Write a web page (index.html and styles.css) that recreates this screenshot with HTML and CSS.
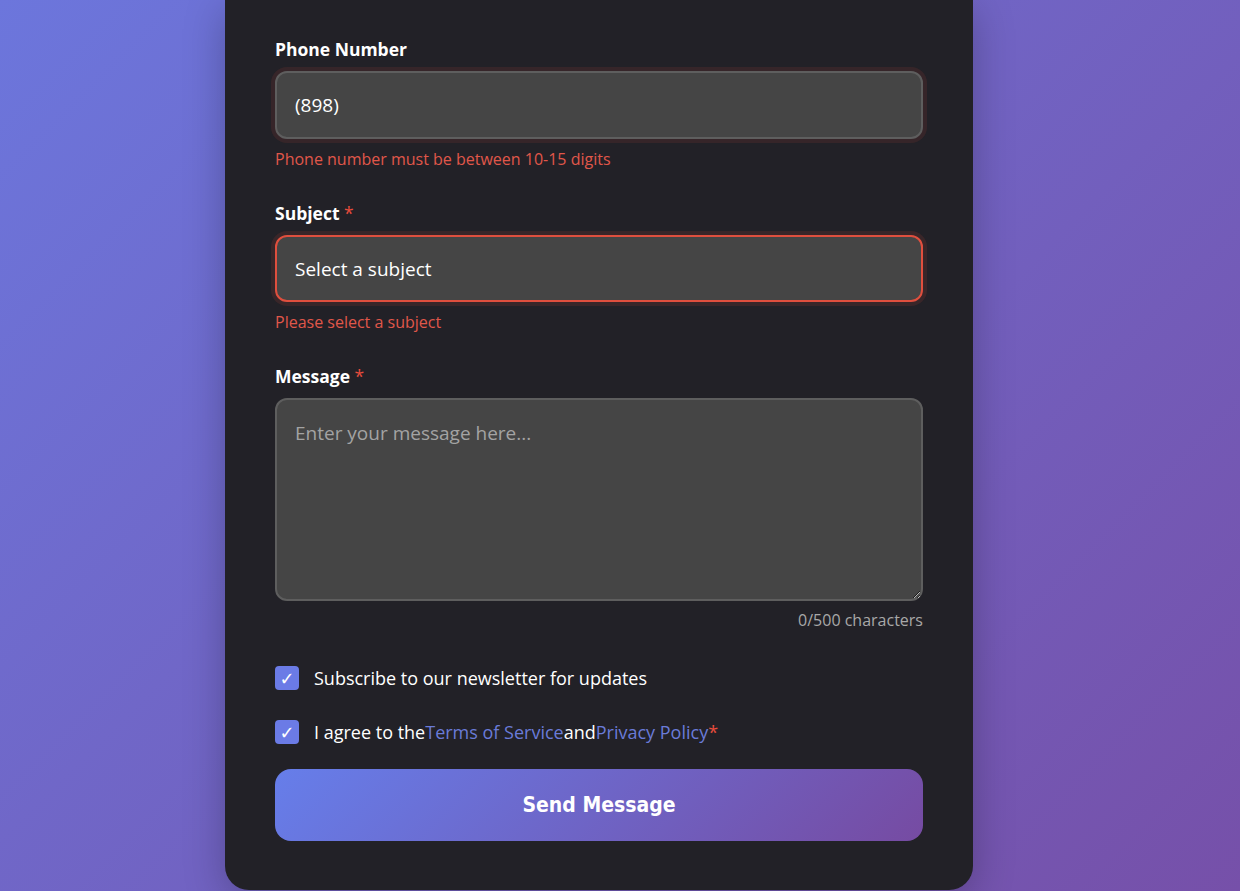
FILE: index.html
```html
<!DOCTYPE html>
<html lang="en">
<head>
<meta charset="utf-8">
<title>Contact Form</title>
<link rel="stylesheet" href="styles.css">
</head>
<body>
<main class="card">
  <form class="form">
    <div class="group">
      <label class="label" for="phone">Phone Number</label>
      <input class="field field-soft-error" id="phone" type="text" value="(898)">
      <div class="error">Phone number must be between 10-15 digits</div>
    </div>
    <div class="group">
      <label class="label" for="subject">Subject <span class="req">*</span></label>
      <div class="field field-error select-like" id="subject">Select a subject</div>
      <div class="error">Please select a subject</div>
    </div>
    <div class="group group-message">
      <label class="label" for="message">Message <span class="req">*</span></label>
      <textarea class="field textarea" id="message" placeholder="Enter your message here..."></textarea>
      <div class="counter">0/500 characters</div>
    </div>
    <div class="check-row">
      <span class="checkbox">&#10003;</span>
      <span class="check-text">Subscribe to our newsletter for updates</span>
    </div>
    <div class="check-row">
      <span class="checkbox">&#10003;</span>
      <span class="check-text">I agree to the<a class="link" href="#">Terms of Service</a>and<a class="link" href="#">Privacy Policy</a><span class="req">*</span></span>
    </div>
    <button class="submit" type="button">Send Message</button>
  </form>
</main>
</body>
</html>
```

FILE: styles.css
```css
html, body {
  margin: 0;
  padding: 0;
}

body {
  height: 891px;
  overflow: hidden;
  background: linear-gradient(135deg, #6c76dc 0%, #7650a9 100%);
  font-family: "Open Sans", "Noto Sans", sans-serif;
  color: #ffffff;
  display: flex;
  justify-content: center;
  padding-right: 42px;
  box-sizing: border-box;
}

.card {
  width: 748px;
  height: 890px;
  box-sizing: border-box;
  background: #222127;
  border-radius: 0 0 24px 24px;
  padding: 36px 50px 0;
  box-shadow: 0 10px 40px rgba(0, 0, 0, 0.25);
}

.form {
  display: flex;
  flex-direction: column;
}

.group {
  display: flex;
  flex-direction: column;
  margin-bottom: 29px;
}

.group-message {
  margin-bottom: 34px;
}

.label {
  font-size: 17.5px;
  font-weight: 700;
  line-height: 26px;
  margin-bottom: 9px;
}

.req {
  color: #e74c3c;
  font-weight: 400;
}

.field {
  box-sizing: border-box;
  width: 100%;
  height: 68px;
  background: #454545;
  border: 2px solid #5e5e5e;
  border-radius: 12px;
  padding: 0 18px;
  color: #ffffff;
  font-family: "Open Sans", "Noto Sans", sans-serif;
  font-size: 19px;
  outline: none;
}

.field-soft-error {
  box-shadow: 0 0 0 4px rgba(231, 76, 60, 0.1);
}

.field-error {
  border-color: #e04f3e;
  box-shadow: 0 0 0 4px rgba(231, 76, 60, 0.12);
}

.select-like {
  height: 67px;
  display: flex;
  align-items: center;
}

.textarea {
  height: 203px;
  padding: 20px 18px;
  line-height: 26px;
  resize: vertical;
}

.textarea::placeholder {
  color: #a3a3a3;
}

.error {
  color: #e0574a;
  font-size: 16px;
  line-height: 24px;
  margin-top: 8px;
}

.counter {
  text-align: right;
  color: #a8a8a8;
  font-size: 16px;
  line-height: 24px;
  margin-top: 7px;
}

.check-row {
  display: flex;
  align-items: center;
  gap: 15px;
  margin-bottom: 30px;
}

.checkbox {
  width: 24px;
  height: 24px;
  border-radius: 4px;
  background: #6b7be6;
  color: #ffffff;
  font-family: "DejaVu Sans", sans-serif;
  font-size: 18px;
  font-weight: 700;
  display: flex;
  align-items: center;
  justify-content: center;
  flex: none;
}

.check-text {
  font-size: 18px;
  line-height: 24px;
}

.link {
  color: #6a7bd8;
  text-decoration: none;
}

.submit {
  margin-top: -5px;
  height: 72px;
  border: none;
  border-radius: 16px;
  background: linear-gradient(135deg, #667eea 0%, #764ba2 100%);
  color: #ffffff;
  font-family: "DejaVu Sans Condensed", "DejaVu Sans", sans-serif;
  font-stretch: condensed;
  font-weight: 700;
  font-size: 21px;
  cursor: pointer;
}
```
